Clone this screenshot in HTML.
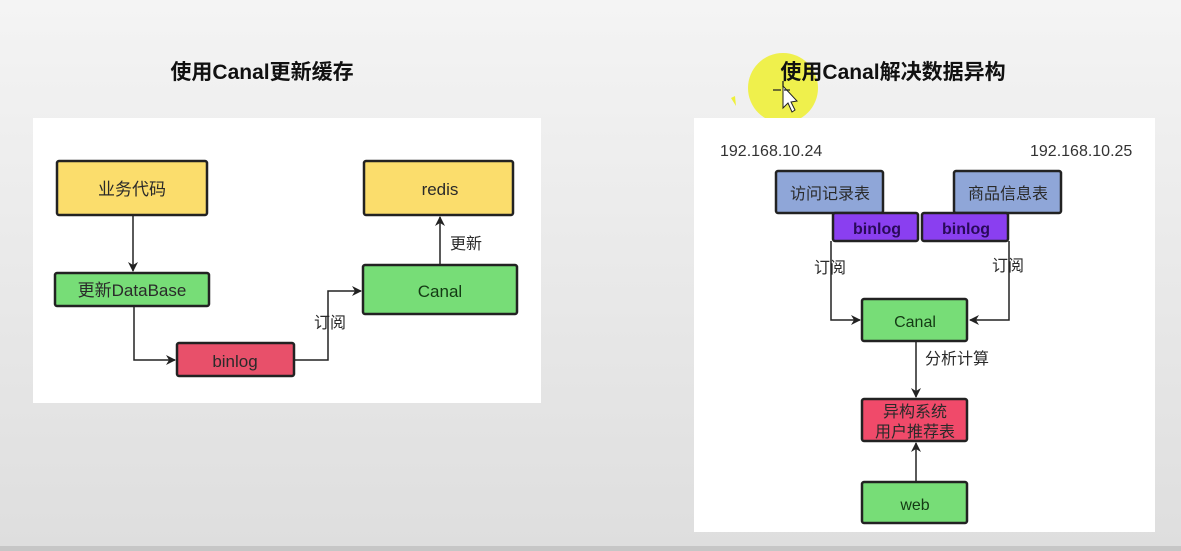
<!DOCTYPE html>
<html><head><meta charset="utf-8"><style>
html,body{margin:0;padding:0;width:1181px;height:551px;overflow:hidden}
body{background:linear-gradient(#f4f4f4,#dedede);font-family:"Liberation Sans","Noto Sans CJK SC",sans-serif}
svg text{font-family:"Liberation Sans","Noto Sans CJK SC",sans-serif}
</style></head><body>
<svg width="1181" height="551" xmlns="http://www.w3.org/2000/svg">
<defs>
<marker id="a" markerWidth="10" markerHeight="10" refX="9" refY="5" orient="auto" markerUnits="userSpaceOnUse"><path d="M0,0 L10,5 L0,10 L3,5 z" fill="#222"/></marker>
</defs>
<rect x="0" y="546" width="1181" height="5" fill="#c6c6c6"/>
<!-- titles -->
<text x="262" y="79" font-size="21" font-weight="bold" text-anchor="middle" fill="#111">使用Canal更新缓存</text>
<circle cx="783" cy="88" r="35" fill="#eef03a" opacity="0.9"/>
<path d="M731,98 l4,-2 l1,10 z" fill="#eef03a"/>
<text x="893" y="79" font-size="21" font-weight="bold" text-anchor="middle" fill="#111">使用Canal解决数据异构</text>
<path d="M783,86 L783,108 L788,103 L792,112 L795,110 L791,102 L797,101 z" fill="#fff" stroke="#222" stroke-width="1"/>
<path d="M773,90 h8 M784,90 h6 M783,81 v6" stroke="#222" stroke-width="1.3"/>
<!-- left panel -->
<rect x="33" y="118" width="508" height="285" fill="#fff"/>
<g stroke="#222" stroke-width="1.5" fill="none">
<path d="M133,215 V271" marker-end="url(#a)"/>
<path d="M134,306 V360 H175" marker-end="url(#a)"/>
<path d="M294,360 H328 V291 H361" marker-end="url(#a)"/>
<path d="M440,265 V217" marker-end="url(#a)"/>
</g>
<g stroke="#222" stroke-width="2.5">
<rect x="57" y="161" width="150" height="54" rx="2" fill="#fbdd6c"/>
<rect x="55" y="273" width="154" height="33" rx="2" fill="#77dd77"/>
<rect x="177" y="343" width="117" height="33" rx="2" fill="#e8506a"/>
<rect x="364" y="161" width="149" height="54" rx="2" fill="#fbdd6c"/>
<rect x="363" y="265" width="154" height="49" rx="2" fill="#77dd77"/>
</g>
<g font-size="17" text-anchor="middle" fill="#2a2a2a">
<text x="132" y="195">业务代码</text>
<text x="132" y="296">更新DataBase</text>
<text x="235" y="367">binlog</text>
<text x="440" y="195">redis</text>
<text x="440" y="297" fill="#143a14">Canal</text>
<text x="466" y="249" font-size="16">更新</text>
<text x="330" y="328" font-size="16">订阅</text>
</g>
<!-- right panel -->
<rect x="694" y="118" width="461" height="414" fill="#fff"/>
<g font-size="16" fill="#333">
<text x="720" y="156">192.168.10.24</text>
<text x="1030" y="156">192.168.10.25</text>
</g>
<g stroke="#222" stroke-width="1.5" fill="none">
<path d="M831,241 V320 H860" marker-end="url(#a)"/>
<path d="M1009,241 V320 H970" marker-end="url(#a)"/>
<path d="M916,341 V397" marker-end="url(#a)"/>
<path d="M916,482 V443" marker-end="url(#a)"/>
</g>
<g stroke="#222" stroke-width="2.5">
<rect x="776" y="171" width="107" height="42" rx="2" fill="#8fa6d8"/>
<rect x="954" y="171" width="107" height="42" rx="2" fill="#8fa6d8"/>
<rect x="833" y="213" width="85" height="28" rx="2" fill="#8a3ff0"/>
<rect x="922" y="213" width="86" height="28" rx="2" fill="#8a3ff0"/>
<rect x="862" y="299" width="105" height="42" rx="2" fill="#77dd77"/>
<rect x="862" y="399" width="105" height="42" rx="2" fill="#f04a6a"/>
<rect x="862" y="482" width="105" height="41" rx="2" fill="#77dd77"/>
</g>
<g font-size="16" text-anchor="middle" fill="#2a2a2a">
<text x="830" y="199">访问记录表</text>
<text x="1008" y="199">商品信息表</text>
<text x="877" y="234" font-weight="bold" fill="#2a0a5a">binlog</text>
<text x="966" y="234" font-weight="bold" fill="#2a0a5a">binlog</text>
<text x="830" y="273">订阅</text>
<text x="1008" y="271">订阅</text>
<text x="915" y="327" fill="#143a14">Canal</text>
<text x="957" y="364">分析计算</text>
<text x="915" y="417">异构系统</text>
<text x="915" y="437">用户推荐表</text>
<text x="915" y="510" fill="#143a14">web</text>
</g>
</svg>
</body></html>
